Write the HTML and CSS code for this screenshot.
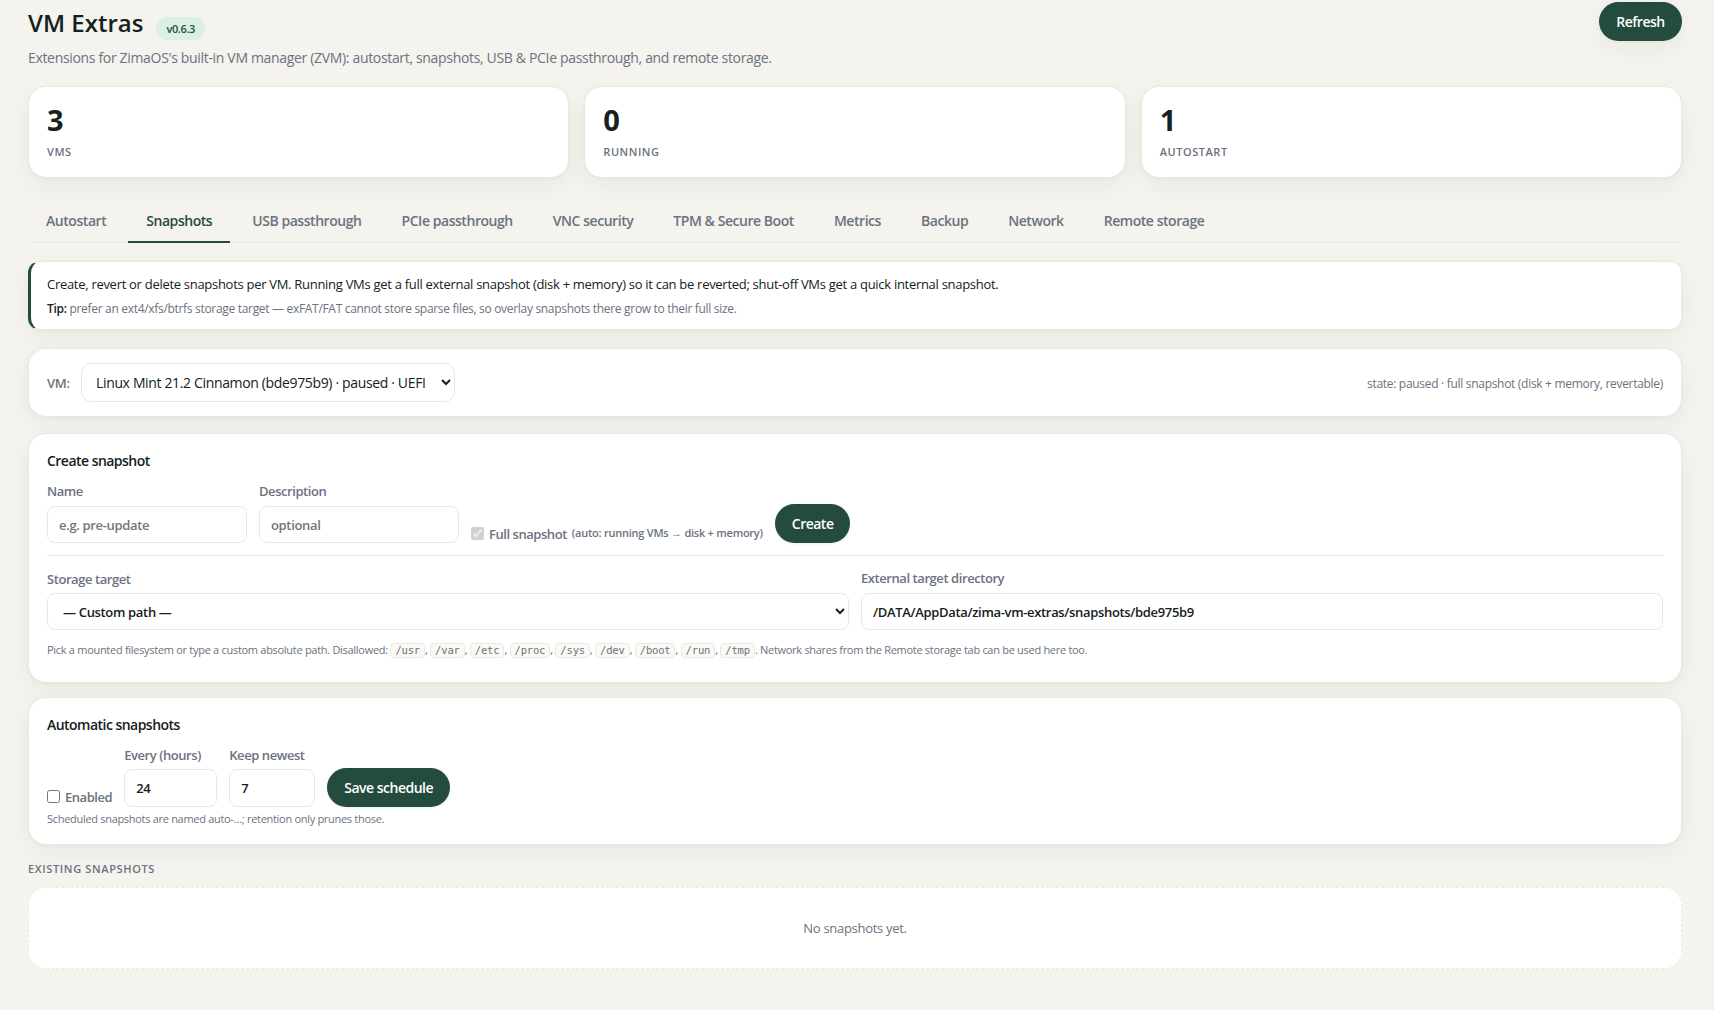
FILE: index.html
```html
<!DOCTYPE html>
<html lang="en">
<head>
    <meta charset="UTF-8">
    <meta name="viewport" content="width=device-width, initial-scale=1.0">
    <title>VM Extras</title>
    <link rel="stylesheet" href="styles.css">
</head>
<body>

<div class="wrap">
    <header class="top">
        <div>
            <div class="title-row">
                <h1>VM Extras</h1>
                <span class="badge">v0.6.3</span>
            </div>
            <p class="subtitle">Extensions for ZimaOS's built-in VM manager (ZVM): autostart, snapshots, USB &amp; PCIe passthrough, and remote storage.</p>
        </div>
        <button class="btn">Refresh</button>
    </header>

    <section class="stats">
        <div class="card stat"><div class="num">3</div><div class="lbl">VMs</div></div>
        <div class="card stat"><div class="num">0</div><div class="lbl">Running</div></div>
        <div class="card stat"><div class="num">1</div><div class="lbl">Autostart</div></div>
    </section>

    <nav class="tabs">
        <button class="tab">Autostart</button>
        <button class="tab active">Snapshots</button>
        <button class="tab">USB passthrough</button>
        <button class="tab">PCIe passthrough</button>
        <button class="tab">VNC security</button>
        <button class="tab">TPM &amp; Secure Boot</button>
        <button class="tab">Metrics</button>
        <button class="tab">Backup</button>
        <button class="tab">Network</button>
        <button class="tab">Remote storage</button>
    </nav>

    <div class="card info">
        <p class="info-main">Create, revert or delete snapshots per VM. Running VMs get a full external snapshot (disk + memory) so it can be reverted; shut-off VMs get a quick internal snapshot.</p>
        <p class="info-tip"><b>Tip:</b> prefer an ext4/xfs/btrfs storage target — exFAT/FAT cannot store sparse files, so overlay snapshots there grow to their full size.</p>
    </div>

    <!-- VM picker -->
    <div class="card picker">
        <label class="field-label" for="vm">VM:</label>
        <select id="vm" class="vm-select">
            <option>Linux Mint 21.2 Cinnamon (bde975b9) · paused · UEFI</option>
        </select>
        <span class="state">state: paused · full snapshot (disk + memory, revertable)</span>
    </div>

    <!-- Create snapshot -->
    <section class="card create">
        <h3>Create snapshot</h3>
        <div class="row">
            <label class="field name-field"><span>Name</span><input type="text" placeholder="e.g. pre-update"></label>
            <label class="field name-field"><span>Description</span><input type="text" placeholder="optional"></label>
            <label class="check"><input type="checkbox" checked disabled><span>Full snapshot</span><small>(auto: running VMs → disk + memory)</small></label>
            <button class="btn">Create</button>
        </div>
        <div class="targets">
            <label class="field"><span>Storage target</span>
                <select><option>— Custom path —</option></select>
            </label>
            <label class="field ext-field"><span>External target directory</span>
                <input type="text" value="/DATA/AppData/zima-vm-extras/snapshots/bde975b9">
            </label>
        </div>
        <p class="hint">Pick a mounted filesystem or type a custom absolute path. Disallowed: <code>/usr</code>, <code>/var</code>, <code>/etc</code>, <code>/proc</code>, <code>/sys</code>, <code>/dev</code>, <code>/boot</code>, <code>/run</code>, <code>/tmp</code>. Network shares from the Remote storage tab can be used here too.</p>
    </section>

    <!-- Schedule -->
    <section class="card schedule">
        <h3>Automatic snapshots</h3>
        <div class="row">
            <label class="check"><input type="checkbox"><span>Enabled</span></label>
            <label class="field every-field"><span>Every (hours)</span><input type="text" value="24"></label>
            <label class="field keep-field"><span>Keep newest</span><input type="text" value="7"></label>
            <button class="btn">Save schedule</button>
        </div>
        <p class="hint">Scheduled snapshots are named auto-…; retention only prunes those.</p>
    </section>

    <h2 class="section-title">Existing snapshots</h2>
    <div class="empty">No snapshots yet.</div>
</div>

</body>
</html>
```

FILE: styles.css
```css
:root {
    --bg: #f5f3ee;
    --card: #ffffff;
    --text: #14211c;
    --muted: #6b7280;
    --line: #ebe9df;
    --green: #244c3e;
    --shadow: 0 1px 3px rgba(20, 33, 28, 0.04), 0 8px 24px rgba(20, 33, 28, 0.05);
}
* {
    box-sizing: border-box;
}
body {
    margin: 0;
    background: var(--bg);
    color: var(--text);
    font-family: "Segoe UI", "Open Sans", "Noto Sans", sans-serif;
    font-size: 14px;
    letter-spacing: -0.3px;
}
h1, h2, h3, p {
    margin: 0;
}
.wrap {
    padding: 2px 32px 0 28px;
}
.top {
    display: flex;
    justify-content: space-between;
    align-items: flex-start;
    height: 84px;
}
.title-row {
    display: flex;
    align-items: flex-start;
    gap: 13px;
}
h1 {
    font-size: 24px;
    font-weight: 600;
    line-height: 42px;
    height: 45px;
    letter-spacing: 0;
}
.badge {
    margin-top: 15px;
    padding: 0 10px;
    height: 23px;
    line-height: 23px;
    border-radius: 12px;
    background: #dcefe5;
    color: var(--green);
    font-size: 11px;
    font-weight: 600;
    letter-spacing: -0.35px;
}
.subtitle {
    color: var(--muted);
    font-size: 14px;
    line-height: 22px;
    letter-spacing: -0.33px;
}
.btn {
    height: 39px;
    padding: 0 17px;
    border: 0;
    border-radius: 20px;
    background: var(--green);
    color: #fff;
    font: 600 14px/39px "Segoe UI", "Open Sans", "Noto Sans", sans-serif;
    letter-spacing: -0.5px;
    box-shadow: var(--shadow);
}
.top .btn {
    width: 83px;
}
.card {
    background: var(--card);
    border: 1px solid var(--line);
    border-radius: 18px;
    box-shadow: var(--shadow);
}
.stats {
    display: grid;
    grid-template-columns: repeat(3, 1fr);
    gap: 15px;
}
.stat {
    height: 92px;
    padding: 13px 18px;
}
.num {
    font-size: 29px;
    font-weight: 700;
    line-height: 40px;
}
.lbl {
    margin-top: 3px;
    color: var(--muted);
    font-size: 11px;
    font-weight: 600;
    line-height: 18px;
    letter-spacing: 0.55px;
    text-transform: uppercase;
}
.tabs {
    display: flex;
    gap: 4px;
    height: 43px;
    margin-top: 22px;
    border-bottom: 1px solid var(--line);
}
.tab {
    height: 43px;
    padding: 0 18px;
    border: 0;
    border-bottom: 2px solid transparent;
    background: none;
    color: var(--muted);
    font: 600 14px/41px "Segoe UI", "Open Sans", "Noto Sans", sans-serif;
    letter-spacing: -0.45px;
}
.tab.active {
    color: var(--green);
    border-bottom-color: var(--green);
}
.info {
    height: 69px;
    margin-top: 18px;
    padding: 10px 16px;
    border-left: 3px solid var(--green);
    border-radius: 12px;
}
.info-main {
    font-size: 13px;
    line-height: 24px;
    letter-spacing: -0.29px;
}
.info-tip {
    color: var(--muted);
    font-size: 12px;
    line-height: 26px;
    letter-spacing: -0.31px;
}
.info-tip b {
    color: var(--text);
    font-weight: 600;
}
.picker {
    display: flex;
    align-items: center;
    height: 69px;
    margin-top: 18px;
    padding: 0 18px;
}
.field-label {
    width: 34px;
    color: var(--muted);
    font-size: 13px;
    font-weight: 600;
}
select, input[type="text"] {
    border: 1px solid var(--line);
    border-radius: 8px;
    background: #fff;
    color: var(--text);
    font: 600 13px "Segoe UI", "Open Sans", "Noto Sans", sans-serif;
    letter-spacing: -0.33px;
}
select {
    padding: 0 0 0 11px;
}
.vm-select {
    width: 374px;
    height: 39px;
    padding-left: 10px;
    border-radius: 10px;
    font-size: 14px;
    font-weight: 400;
    letter-spacing: -0.35px;
}
input::placeholder {
    color: #757575;
}
.state {
    margin: 2px 0 0 auto;
    color: var(--muted);
    font-size: 12px;
}
.create {
    height: 250px;
    margin-top: 16px;
    padding: 16px 18px;
}
h3 {
    font-size: 14px;
    font-weight: 600;
    line-height: 22px;
    letter-spacing: -0.53px;
}
.row {
    display: flex;
    align-items: flex-end;
    gap: 12px;
    height: 71px;
}
.field {
    display: flex;
    flex-direction: column;
    color: var(--muted);
    font-size: 13px;
    font-weight: 600;
    letter-spacing: -0.43px;
}
.field span {
    line-height: 20px;
    margin-bottom: 4px;
}
.name-field span, .ext-field span {
    line-height: 18px;
    margin-bottom: 6px;
}
.field input, .field select {
    width: 100%;
    height: 37px;
}
.field input {
    padding: 0 11px;
}
.name-field {
    width: 200px;
}
.check {
    display: flex;
    align-items: flex-end;
    color: var(--muted);
    font-size: 13px;
    font-weight: 600;
    line-height: 18px;
    letter-spacing: -0.45px;
}
.check input {
    width: 13px;
    height: 13px;
    margin: 0 5px 3px 0;
}
.check small {
    margin: 0 0 1px 5px;
    font-size: 11px;
    letter-spacing: -0.24px;
}
.row .btn {
    box-shadow: 0 1px 3px rgba(20, 33, 28, 0.08);
}
.targets {
    display: grid;
    grid-template-columns: 1fr 1fr;
    gap: 12px;
    margin-top: 12px;
    padding-top: 13px;
    border-top: 1px solid var(--line);
}
.hint {
    color: var(--muted);
    font-size: 11px;
    line-height: 18px;
}
.create .hint {
    margin-top: 11px;
    letter-spacing: -0.29px;
}
code {
    display: inline-block;
    height: 15px;
    padding: 0 4px;
    border: 1px solid var(--line);
    border-radius: 4px;
    background: #fbf9f3;
    font: 10.5px/13px Consolas, "DejaVu Sans Mono", monospace;
    letter-spacing: -0.18px;
}
.schedule {
    height: 148px;
    margin-top: 14px;
    padding: 16px 18px;
}
.schedule .check {
    margin-bottom: 1px;
}
.schedule .field input {
    height: 38px;
}
.every-field {
    width: 93px;
}
.keep-field {
    width: 86px;
}
.schedule .hint {
    margin-top: 3px;
}
.section-title {
    margin-top: 14px;
    color: var(--muted);
    font-size: 11px;
    font-weight: 600;
    line-height: 20px;
    letter-spacing: 0.65px;
    text-transform: uppercase;
}
.empty {
    height: 82px;
    margin-top: 8px;
    border: 1px dashed var(--line);
    border-radius: 18px;
    background: #fff;
    color: var(--muted);
    font-size: 13px;
    line-height: 80px;
    text-align: center;
}
```
